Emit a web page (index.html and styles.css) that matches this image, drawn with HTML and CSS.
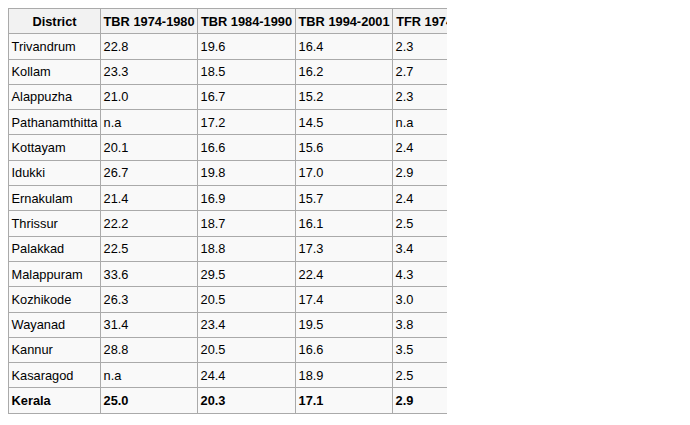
FILE: index.html
```html
<!DOCTYPE html>
<html>
<head>
<meta charset="utf-8">
<link rel="stylesheet" href="styles.css">
</head>
<body>
<div class="clip">
<table class="wikitable">
<colgroup>
<col class="c-district"><col class="c-num"><col class="c-num2"><col class="c-num3"><col class="c-tfr">
</colgroup>
<thead>
<tr><th>District</th><th>TBR 1974-1980</th><th>TBR 1984-1990</th><th>TBR 1994-2001</th><th>TFR 1974-1980</th></tr>
</thead>
<tbody>
<tr><td>Trivandrum</td><td>22.8</td><td>19.6</td><td>16.4</td><td>2.3</td></tr>
<tr><td>Kollam</td><td>23.3</td><td>18.5</td><td>16.2</td><td>2.7</td></tr>
<tr><td>Alappuzha</td><td>21.0</td><td>16.7</td><td>15.2</td><td>2.3</td></tr>
<tr><td>Pathanamthitta</td><td>n.a</td><td>17.2</td><td>14.5</td><td>n.a</td></tr>
<tr><td>Kottayam</td><td>20.1</td><td>16.6</td><td>15.6</td><td>2.4</td></tr>
<tr><td>Idukki</td><td>26.7</td><td>19.8</td><td>17.0</td><td>2.9</td></tr>
<tr><td>Ernakulam</td><td>21.4</td><td>16.9</td><td>15.7</td><td>2.4</td></tr>
<tr><td>Thrissur</td><td>22.2</td><td>18.7</td><td>16.1</td><td>2.5</td></tr>
<tr><td>Palakkad</td><td>22.5</td><td>18.8</td><td>17.3</td><td>3.4</td></tr>
<tr><td>Malappuram</td><td>33.6</td><td>29.5</td><td>22.4</td><td>4.3</td></tr>
<tr><td>Kozhikode</td><td>26.3</td><td>20.5</td><td>17.4</td><td>3.0</td></tr>
<tr><td>Wayanad</td><td>31.4</td><td>23.4</td><td>19.5</td><td>3.8</td></tr>
<tr><td>Kannur</td><td>28.8</td><td>20.5</td><td>16.6</td><td>3.5</td></tr>
<tr><td>Kasaragod</td><td>n.a</td><td>24.4</td><td>18.9</td><td>2.5</td></tr>
<tr class="total"><td>Kerala</td><td>25.0</td><td>20.3</td><td>17.1</td><td>2.9</td></tr>
</tbody>
</table>
</div>
</body>
</html>
```

FILE: styles.css
```css
html, body {
  background: #ffffff;
}
body {
  margin: 8px;
  font-family: "Liberation Sans", Arial, Helvetica, sans-serif;
  font-size: 12.8px;
  line-height: 19.2px;
  color: #000;
}
.clip {
  width: 439px;
  overflow: hidden;
}
.wikitable {
  border-collapse: collapse;
  table-layout: fixed;
  width: 481px;
  background: #f9f9f9;
  border: 1px solid #aaa;
}
.c-district { width: 92px; }
.c-num { width: 97px; }
.c-num2 { width: 98px; }
.c-num3 { width: 97px; }
.c-tfr { width: 97px; }
.wikitable th,
.wikitable td {
  border: 1px solid #aaa;
  padding: 2.56px;
  white-space: nowrap;
  text-align: left;
}
.wikitable th {
  background: #f2f2f2;
  font-weight: bold;
  text-align: center;
}
.wikitable .total td {
  font-weight: bold;
}
```
